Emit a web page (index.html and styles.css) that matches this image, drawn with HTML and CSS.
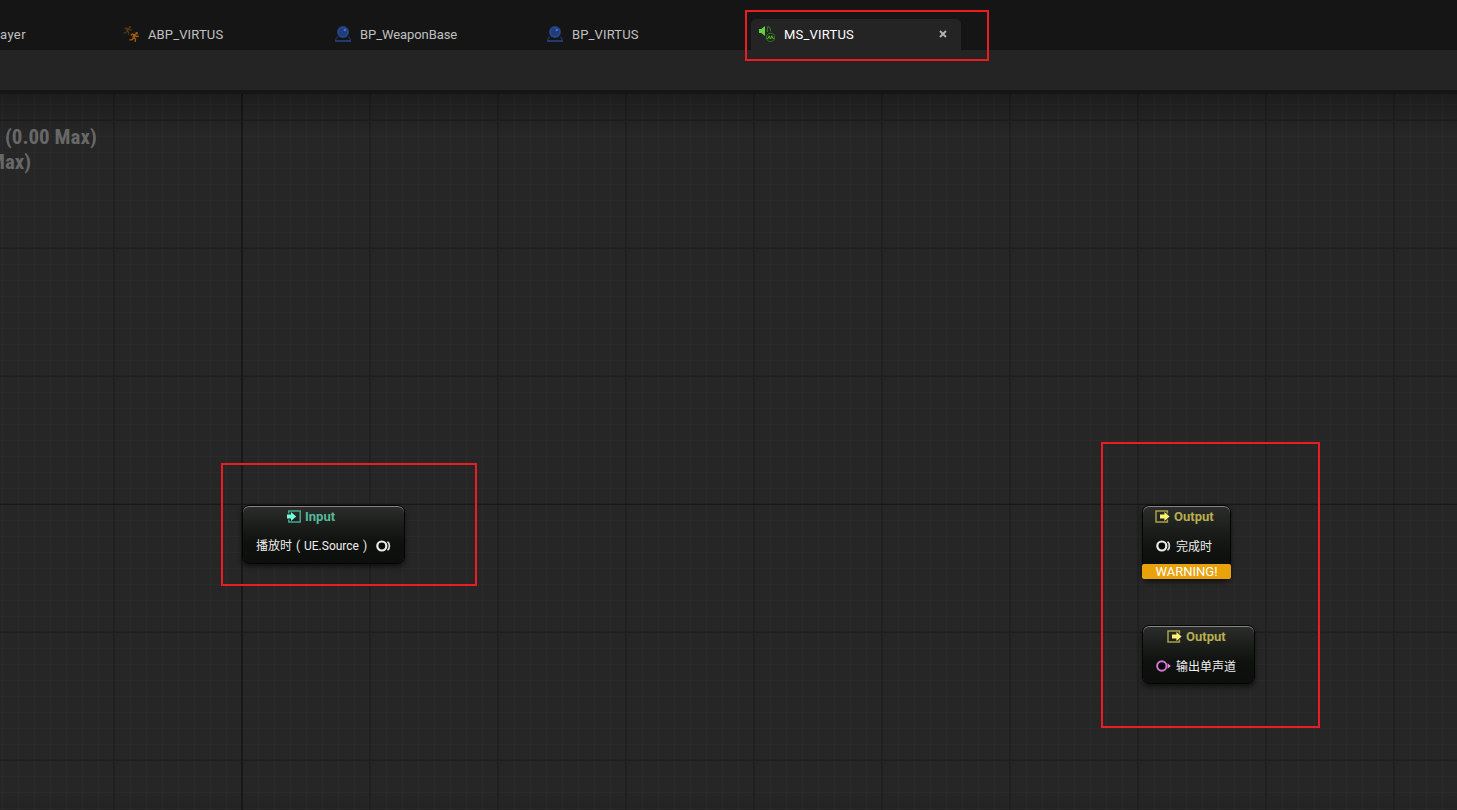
FILE: index.html
```html
<!DOCTYPE html>
<html lang="zh-CN">
<head>
  <meta charset="UTF-8" />
  <meta name="viewport" content="width=device-width, initial-scale=1.0" />
  <title>MS_VIRTUS</title>
  <link rel="stylesheet" href="styles.css">
</head>
<body>
  <!-- shared icons -->
  <svg class="defs" width="0" height="0">
    <symbol id="icon-blueprint" viewBox="0 0 16 16">
      <path d="M2.6 10.5 L0.8 13.2 V15.2 H15.2 V13.2 L13.4 10.5" fill="none" stroke="#1f3566" stroke-width="1.2" />
      <path d="M0 14h16v2H0z" fill="#213a70" />
      <circle cx="8" cy="6" r="6" fill="#243f7a" />
      <circle cx="8" cy="6" r="4.7" fill="#223c78" stroke="#294d99" stroke-width="0.9" />
      <circle cx="9.8" cy="4" r="1.2" fill="#3f74dc" />
    </symbol>
    <symbol id="icon-runner" viewBox="0 0 10 10">
      <circle cx="7.6" cy="1.3" r="1.3" fill="currentColor" />
      <path d="M1.8 3.4 L3.4 2 L6.2 3 L4.6 5.6 L6.5 7 L6.1 9.8 M4.6 5.6 L3.2 7.7 L0.3 7.8 M6.2 3 L7.4 4.6 L9.8 4.2" fill="none" stroke="currentColor" stroke-width="1.3" />
      <path d="M5.4 2.6L4.4 6" stroke="currentColor" stroke-width="2.2" />
    </symbol>
    <symbol id="icon-output" viewBox="0 0 15 13">
      <path d="M12.4 3.4V1H1v11h11.4V9.4" fill="none" stroke="#a89f4c" stroke-width="1.5" />
      <path d="M5 4.4h4.4V1.9L14.6 6.5 9.4 11.1V8.6H5z" fill="#fff170" />
    </symbol>
    <symbol id="pin-trigger" viewBox="0 0 15 12">
      <circle cx="5.8" cy="6" r="4.5" fill="#080908" stroke="#ececec" stroke-width="2.2" />
      <path d="M11.5 1.8Q13.4 3 13.4 6T11.5 10.2" fill="none" stroke="#dedede" stroke-width="1.7" />
    </symbol>
  </svg>

  <header class="tab-bar">
    <div class="tab tab-cut"><span>ayer</span></div>
    <div class="tab">
      <svg class="tab-icon" viewBox="0 0 16 16">
        <use class="runner-back" href="#icon-runner" x="0" y="0" width="9" height="9" />
        <use class="runner-front" href="#icon-runner" x="6" y="6" width="10" height="10" />
      </svg>
      <span>ABP_VIRTUS</span>
    </div>
    <div class="tab">
      <svg class="tab-icon"><use href="#icon-blueprint" /></svg>
      <span class="tab-name-long">BP_WeaponBase</span>
    </div>
    <div class="tab">
      <svg class="tab-icon"><use href="#icon-blueprint" /></svg>
      <span>BP_VIRTUS</span>
    </div>
    <div class="tab active">
      <svg class="tab-icon" viewBox="0 0 16 16">
        <path d="M0 3h2.4L6 0v10L2.4 7H0z" fill="#62cf3e" />
        <path d="M8.4 .6V6M9 .4Q12.4 2 11.3 5.4" fill="none" stroke="#376f27" stroke-width="1.1" />
        <circle cx="11.5" cy="11.4" r="4.1" fill="#1c2c18" stroke="#37742a" stroke-width="1" />
        <path d="M8 12.4h1.2l1-2.6 1.3 3.2 1.3-3.2 1.1 2.6h1.2" fill="none" stroke="#57b839" stroke-width="1" />
      </svg>
      <span class="tab-name">MS_VIRTUS</span>
      <svg class="tab-close" viewBox="0 0 8 8"><path d="M1 1l6 6M7 1L1 7" stroke="#b4b4b4" stroke-width="1.8" /></svg>
    </div>
  </header>
  <div class="toolbar"></div>

  <main class="graph">
    <div class="stats">
      <div class="stats-line">(0.00 Max)</div>
      <div class="stats-line stats-cut">Max)</div>
    </div>

    <section class="node node-input">
      <div class="node-title input-title">
        <svg class="title-icon" viewBox="0 0 15 13">
          <path d="M1.8 3.4V1h11.4v11H1.8V9.4" fill="none" stroke="#44a58b" stroke-width="1.5" />
          <path d="M0 4.4h4V1.9L9.2 6.5 4 11.1V8.6H0z" fill="#72ffdc" />
        </svg>
        <span>Input</span>
      </div>
      <div class="node-row">
        <span class="pin-label">播放时<i class="paren">(</i>UE.Source<i class="paren">)</i></span>
        <svg class="pin"><use href="#pin-trigger" /></svg>
      </div>
    </section>

    <section class="node node-finished">
      <div class="node-title output-title">
        <svg class="title-icon"><use href="#icon-output" /></svg>
        <span>Output</span>
      </div>
      <div class="node-row">
        <svg class="pin"><use href="#pin-trigger" /></svg>
        <span>完成时</span>
      </div>
      <div class="warning">WARNING!</div>
    </section>

    <section class="node node-mono">
      <div class="node-title output-title">
        <svg class="title-icon"><use href="#icon-output" /></svg>
        <span>Output</span>
      </div>
      <div class="node-row">
        <svg class="pin" viewBox="0 0 15 12">
          <circle cx="5.8" cy="6" r="4.7" fill="#080908" stroke="#d478d6" stroke-width="1.9" />
          <path d="M11.6 3.2L14.8 6l-3.2 2.8z" fill="#e58be6" />
        </svg>
        <span>输出单声道</span>
      </div>
    </section>
  </main>

  <!-- red callouts -->
  <div class="mark mark-tab"></div>
  <div class="mark mark-input"></div>
  <div class="mark mark-output"></div>
</body>
</html>
```

FILE: styles.css
```css
* {
  box-sizing: border-box;
}
body {
  margin: 0;
  height: 810px;
  position: relative;
  display: flex;
  flex-direction: column;
  overflow: hidden;
  background-color: #151515;
  font-family: Roboto, "Noto Sans CJK SC", sans-serif;
  font-size: 13px;
  color: #c0c0c0;
}
.defs {
  position: absolute;
}

/* tabs */
.tab-bar {
  display: flex;
  flex: none;
  height: 50px;
  padding-top: 19px;
  background-color: #151515;
}
.tab {
  display: flex;
  align-items: center;
  width: 212px;
  height: 31px;
  padding-left: 8px;
  line-height: 31px;
  letter-spacing: 0.14px;
  white-space: nowrap;
}
.tab-cut {
  width: 115px;
  padding-left: 0;
  letter-spacing: 0.4px;
}
.tab-name-long {
  letter-spacing: -0.08px;
}
.tab-icon {
  width: 16px;
  height: 16px;
  margin-right: 9px;
  margin-bottom: 1px;
}
.tab.active {
  width: 210px;
  border-radius: 5px 5px 0 0;
  background-color: #242424;
  color: #fff;
}
.tab-name {
  letter-spacing: 0.2px;
}
.tab-close {
  width: 8px;
  height: 8px;
  margin-left: auto;
  margin-right: 14px;
  margin-bottom: 1px;
}
.runner-back {
  color: #563810;
}
.runner-front {
  color: #a9610c;
}
.toolbar {
  flex: none;
  height: 40px;
  margin-bottom: 4px;
  background-color: #242424;
}

/* graph */
.graph {
  position: relative;
  flex: 1;
  background-color: #262626;
  background-image:
    linear-gradient(rgba(0, 0, 0, 0.25), transparent 40px),
    linear-gradient(0deg, rgba(0, 0, 0, 0.08), transparent 16px),
    linear-gradient(#181818, #181818),
    linear-gradient(#181818, #181818),
    linear-gradient(90deg, #202020 2px, transparent 2px),
    linear-gradient(#222 1px, #1d1d1d 1px, #1d1d1d 2px, transparent 2px),
    linear-gradient(90deg, #2a2a2a 1px, transparent 1px),
    linear-gradient(#2a2a2a 1px, transparent 1px);
  background-size: 100% 100%, 100% 100%, 2px 100%, 100% 1px, 128px 128px, 128px 128px, 16px 16px, 16px 16px;
  background-position: 0 0, 0 0, 241px 0, 0 410px, 113px 0, 0 25px, 2px 0, 0 10px;
  background-repeat: no-repeat, no-repeat, no-repeat, no-repeat, repeat, repeat, repeat, repeat;
}
.stats {
  padding: 31px 0 0 5px;
  font-family: "Roboto Condensed", Roboto, sans-serif;
  font-size: 21px;
  font-weight: bold;
  line-height: 25px;
  color: #686868;
}
.stats-cut {
  margin-left: -16px;
}

/* nodes */
.node {
  position: absolute;
  height: 59px;
  border: 1px solid #050505;
  border-radius: 7px;
  background: linear-gradient(#2c2e2c, #1b1d1b 35%, #0f110f 65%, #0d0f0d);
  box-shadow: inset 0 1px 0 #858585, 0 3px 5px rgba(0, 0, 0, 0.55);
  font-size: 12px;
  color: #eee;
}
.node-input {
  left: 242px;
  top: 411px;
  width: 163px;
}
.node-finished {
  left: 1142px;
  top: 411px;
  width: 89px;
  height: 74px;
}
.node-mono {
  left: 1142px;
  top: 531px;
  width: 113px;
}
.node-title {
  display: flex;
  align-items: center;
  height: 21px;
  padding-left: 12px;
  font-size: 13px;
  font-weight: bold;
  line-height: 20px;
}
.input-title {
  padding-left: 44px;
  color: #55b89c;
}
.input-title .title-icon {
  margin-right: 3px;
}
.output-title {
  color: #b9ad4d;
}
.node-mono .output-title {
  padding-left: 24px;
}
.title-icon {
  width: 15px;
  height: 13px;
  margin-right: 4px;
  margin-bottom: 1px;
}
.node-row {
  display: flex;
  align-items: center;
  height: 20px;
  margin-top: 9px;
  padding-left: 13px;
  line-height: 20px;
  white-space: nowrap;
}
.pin {
  width: 15px;
  height: 12px;
  margin-right: 5px;
}
.node-row span {
  padding-top: 1px;
}
.node-row .pin-label {
  width: 120px;
  padding-top: 0;
}
.paren {
  display: inline-block;
  width: 12px;
  font-style: normal;
  text-align: center;
}
.warning {
  height: 15px;
  margin: 8px -1px 0;
  border-radius: 2px;
  background-color: #e9a20b;
  color: #fff;
  font-size: 13px;
  line-height: 15px;
  text-align: center;
}

/* callouts */
.mark {
  position: absolute;
  border: 2px solid #ed1c24;
  pointer-events: none;
}
.mark-tab {
  left: 745px;
  top: 10px;
  width: 244px;
  height: 51px;
}
.mark-input {
  left: 221px;
  top: 463px;
  width: 256px;
  height: 123px;
}
.mark-output {
  left: 1101px;
  top: 442px;
  width: 219px;
  height: 286px;
}
```
